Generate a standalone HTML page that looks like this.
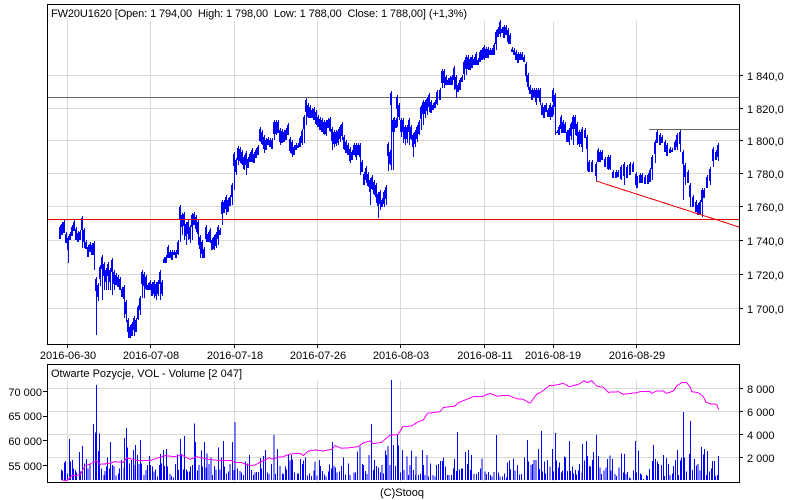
<!DOCTYPE html>
<html><head><meta charset="utf-8"><style>
html,body{margin:0;padding:0;background:#fff}
svg{display:block}
text{font-family:"Liberation Sans",sans-serif;font-size:11px;fill:#000}
</style></head><body>
<svg width="800" height="500" viewBox="0 0 800 500" xmlns="http://www.w3.org/2000/svg">
<defs>
<path id="px" d="M60 225V239M62 222V235M64 220V233M66 232V243M68 236V263M70 232V240M72 225V236M74 220V231M76 227V240M78 231V242M80 230V240M82 216V248M84 228V248M86 240V249M88 245V257M90 242V252M92 243V255M94 241V270M96 277V335M98 283V301M100 265V286M102 255V300M104 262V290M106 268V290M108 262V290M110 268V290M112 258V295M114 270V290M116 273V285M118 275V287M120 277V290M122 287V297M124 285V318M126 300V322M128 318V338M130 325V338M132 322V336M134 316V336M136 318V332M138 305V320M140 296V315M142 270V298M144 272V298M146 275V290M148 283V290M150 280V290M152 282V296M154 280V298M156 282V300M158 280V296M160 270V300M162 280V296M164 257V263M166 255V263M168 245V258M170 250V258M172 250V260M174 250V255M176 250V258M178 240V255M180 205V242M182 213V235M184 212V240M186 222V245M188 220V240M190 225V243M192 213V240M194 212V225M196 215V232M198 220V245M200 235V258M202 240V258M204 247V258M206 225V242M208 232V242M210 228V243M212 238V250M214 235V250M216 232V248M218 225V245M220 228V235M222 200V225M224 200V213M226 195V215M228 198V212M230 195V206M232 183V205M234 152V190M236 158V175M238 146V165M240 147V163M242 150V165M244 155V170M246 151V175M248 157V168M250 152V162M252 148V162M254 152V163M256 148V158M258 145V155M260 127V142M262 130V145M264 135V153M266 138V150M268 137V145M270 138V147M272 138V149M274 120V140M276 120V135M278 120V133M280 128V145M282 129V143M284 130V142M286 128V140M288 123V135M290 137V153M292 140V157M294 145V155M296 143V150M298 143V148M300 136V147M302 129V145M304 115V143M306 98V125M308 103V118M310 105V118M312 108V118M314 107V120M316 110V125M318 115V127M320 117V130M322 118V132M324 120V135M326 120V136M328 118V128M330 117V132M332 127V150M334 130V147M336 130V146M338 129V145M340 125V142M342 122V140M344 135V150M346 140V153M348 143V155M350 147V163M352 150V160M354 143V155M356 143V160M358 143V155M360 143V175M362 160V172M364 172V185M366 166V183M368 172V187M370 178V205M372 175V190M374 180V195M376 183V203M378 192V218M380 190V210M382 198V207M384 190V207M386 185V205M388 142V171M390 150V165M391 91V170M393 118V170M394 117V132M396 118V128M397 95V127M399 103V120M401 118V137M403 118V143M405 125V145M407 125V143M409 118V145M411 125V140M413 133V157M415 130V147M417 125V142M419 120V135M421 105V130M423 100V125M425 100V118M427 97V115M429 93V112M431 100V113M433 103V110M435 100V108M437 90V105M440 88V100M442 69V88M444 69V88M446 75V85M448 78V85M450 76V85M452 75V85M454 66V90M456 75V98M458 83V92M460 78V90M462 75V82M464 60V80M466 55V75M468 55V70M470 57V70M472 55V68M474 57V65M476 52V65M478 58V65M480 50V62M482 48V60M484 45V60M486 47V58M488 47V58M490 48V55M492 48V55M494 43V55M496 30V50M498 27V37M500 20V37M502 27V33M504 25V38M506 25V35M508 28V44M510 33V44M512 47V52M514 48V55M516 50V60M518 52V63M520 52V60M522 52V60M524 55V62M526 62V82M528 73V90M530 85V94M532 88V100M534 88V97M536 88V105M538 88V98M540 88V105M542 103V115M544 105V118M546 103V112M548 108V117M550 103V120M552 105V117M553 88V115M555 93V135M557 130V133M559 125V135M561 115V133M563 120V133M565 122V133M567 130V142M569 128V145M571 122V140M573 115V145M575 115V135M577 122V145M579 130V147M581 130V147M582 127V152M585 128V138M587 135V171M589 160V172M592 160V172M596 162V181M598 148V162M600 150V162M602 150V160M605 157V167M608 155V170M610 155V170M613 170V178M616 170V178M618 170V177M621 165V180M624 162V185M627 165V178M630 162V175M633 162V172M636 172V185M637 176V188M640 173V183M642 173V183M645 175V184M648 173V184M650 168V182M652 155V180M655 140V163M657 130V143M660 133V145M662 135V143M665 140V152M667 143V156M670 147V153M672 148V152M675 140V150M677 133V150M680 130V152M683 150V200M685 163V185M688 170V183M690 183V207M693 195V207M696 200V212M698 203V215M700 200V215M702 188V217M704 188V198M707 175V188M710 167V185M713 147V167M716 150V160M718 143V161"/>
</defs>
<rect width="800" height="500" fill="#fff"/>
<g stroke="#d9d9d9" stroke-width="1" shape-rendering="crispEdges" fill="none">
<path d="M48 75.5H739M48 108.5H739M48 140.5H739M48 173.5H739M48 206.5H739M48 240.5H739M48 274.5H739M48 308.5H739"/>
<path d="M67.5 21V344M150.5 21V344M234.5 21V344M317.5 21V344M400.5 21V344M484.5 21V344M553.5 21V344M636.5 21V344"/>
<path d="M48 388.5H739M48 411.5H739M48 434.5H739M48 457.5H739"/>
<path d="M67.5 381V482M150.5 381V482M234.5 381V482M317.5 381V482M400.5 381V482M484.5 381V482M553.5 381V482M636.5 381V482"/>
</g>
<g fill="none" stroke-width="1" shape-rendering="crispEdges">
<path stroke="#666" d="M48 97.5H739M649 129.5H739"/>
</g>
<g fill="none" stroke="#00f" shape-rendering="crispEdges">
<use href="#px" stroke-width="1" transform="translate(.5 0)"/>
<use href="#px" stroke-width="2" stroke-dasharray="0 2 12 100"/>
</g>
<g fill="none" shape-rendering="crispEdges">
<path stroke="#e00000" stroke-width="1" d="M48 219.5H739"/>
<path stroke="#ee0000" stroke-width="1" d="M596 181L739 227"/>
</g>
<g transform="translate(0 340) scale(.33333)">
<path fill="none" stroke="#00f" stroke-width="3" shape-rendering="crispEdges" d="M185 420V388M188 420V393M194 420V367M197 420V363M203 420V400M209 420V297M212 420V365M218 420V360M221 420V385M227 420V390M230 420V398M238 420V336M241 420V395M247 420V318M254 420V370M260 420V357M264 420V385M270 420V370M280 420V252M286 420V278M290 420V135M295 420V333M298 420V280M305 420V385M312 420V405M315 420V393M320 420V380M323 420V353M328 420V385M331 420V306M337 420V375M342 420V378M348 420V407M355 420V400M359 420V385M364 420V360M372 420V382M374 420V294M380 420V264M383 420V322M389 420V370M395 420V360M400 420V330M405 420V375M407 420V315M412 420V345M417 420V372M421 420V300M424 420V370M432 420V405M438 420V390M442 420V375M448 420V348M452 420V375M458 420V380M462 420V395M467 420V388M473 420V410M478 420V375M481 420V342M485 420V370M490 420V330M493 420V378M499 420V327M503 420V380M510 420V402M515 420V408M520 420V412M526 420V372M532 420V343M535 420V390M541 420V297M544 420V342M550 420V388M553 420V288M559 420V388M562 420V395M568 420V395M572 420V380M578 420V375M583 420V250M586 420V306M592 420V392M597 420V375M604 420V332M607 420V380M613 420V306M618 420V382M621 420V340M627 420V372M633 420V352M638 420V405M644 420V378M648 420V388M655 420V322M660 420V388M664 420V352M670 420V303M673 420V380M679 420V400M686 420V395M690 420V372M697 420V306M702 420V390M705 420V246M713 420V385M720 420V393M724 420V397M731 420V405M737 420V365M742 420V370M748 420V345M755 420V390M760 420V405M765 420V398M770 420V396M776 420V396M782 420V354M785 420V385M791 420V348M796 420V330M802 420V398M807 420V402"/>
<path fill="none" stroke="#f0f" stroke-width="3" shape-rendering="crispEdges" d="M185 420L200 422L215 407L240 405L255 378L270 372L290 362L300 373L330 370L345 365L370 367L380 354L395 357L415 362L450 362L470 355L495 347L525 350L545 345L570 358L590 350L620 357L660 362L695 362L705 368L725 368L750 377L765 375L790 362L810 352"/>
</g>
<g transform="translate(270 340) scale(.33333)">
<path fill="none" stroke="#00f" stroke-width="3" shape-rendering="crispEdges" d="M5 420V372M12 420V285M17 420V402M22 420V327M30 420V378M37 420V400M40 420V402M46 420V380M50 420V388M56 420V343M60 420V362M65 420V345M68 420V358M73 420V397M82 420V400M85 420V400M91 420V357M97 420V372M101 420V362M106 420V353M112 420V407M118 420V400M125 420V408M132 420V392M135 420V365M141 420V407M148 420V360M152 420V378M157 420V393M163 420V403M168 420V410M175 420V395M179 420V373M184 420V385M187 420V306M192 420V378M197 420V383M201 420V398M208 420V395M214 420V378M220 420V353M226 420V403M235 420V370M240 420V405M252 420V397M256 420V397M262 420V335M270 420V320M277 420V372M280 420V375M286 420V393M291 420V402M297 420V345M304 420V252M310 420V390M313 420V360M320 420V378M325 420V382M331 420V397M336 420V375M340 420V400M347 420V332M350 420V345M354 420V318M360 420V375M364 420V120M371 420V315M376 420V378M382 420V285M386 420V317M392 420V397M398 420V330M402 420V390M411 420V350M416 420V405M420 420V375M425 420V332M430 420V390M436 420V405M438 420V350M445 420V405M451 420V400M457 420V330M460 420V375M465 420V405M471 420V345M476 420V410M481 420V370M489 420V405M495 420V410M500 420V375M505 420V372M511 420V363M517 420V363M521 420V352M526 420V380M532 420V405M537 420V405M544 420V405M550 420V385M553 420V357M559 420V393M562 420V276M569 420V388M575 420V386M578 420V386M587 420V336M592 420V372M596 420V330M602 420V390M605 420V345M612 420V402M620 420V402M625 420V396M632 420V385M636 420V355M645 420V395M650 420V402M655 420V396M661 420V405M666 420V410M672 420V396M679 420V285M686 420V398M690 420V410M697 420V410M703 420V400M709 420V412M713 420V368M719 420V362M722 420V388M730 420V356M735 420V392M742 420V375M748 420V403M755 420V402M763 420V352M772 420V300M775 420V365"/>
<path fill="none" stroke="#f0f" stroke-width="3" shape-rendering="crispEdges" d="M0 355L12 358L20 352L40 350L60 342L90 340L100 347L115 333L135 330L160 333L185 328L195 317L215 325L240 323L265 320L280 308L300 303L310 311L335 307L358 287L385 283L398 260L425 258L445 245L460 240L472 220L510 215L520 203L555 198L565 188L590 178L610 170L635 170L660 160L680 168L715 166L740 176L760 178L780 190"/>
</g>
<g transform="translate(530 340) scale(.33333)">
<path fill="none" stroke="#00f" stroke-width="3" shape-rendering="crispEdges" d="M3 420V375M8 420V372M12 420V360M18 420V360M25 420V327M28 420V387M34 420V273M38 420V395M44 420V365M47 420V400M53 420V360M60 420V380M67 420V327M70 420V395M76 420V279M79 420V362M85 420V383M88 420V368M95 420V398M98 420V392M104 420V350M106 420V353M112 420V393M118 420V303M121 420V393M127 420V380M130 420V400M137 420V390M140 420V403M146 420V392M149 420V372M156 420V398M157 420V312M163 420V362M170 420V303M172 420V348M179 420V378M181 420V380M187 420V360M190 420V336M199 420V285M200 420V385M206 420V348M210 420V382M215 420V402M222 420V392M228 420V383M232 420V357M240 420V347M243 420V392M247 420V357M255 420V402M259 420V408M267 420V383M274 420V340M280 420V397M283 420V342M288 420V402M292 420V396M298 420V412M302 420V415M310 420V392M316 420V303M320 420V398M325 420V332M331 420V400M334 420V403M341 420V417M349 420V405M352 420V408M358 420V387M367 420V363M370 420V315M376 420V357M382 420V365M386 420V372M394 420V375M400 420V345M403 420V408M409 420V354M416 420V372M420 420V405M427 420V400M430 420V378M436 420V360M443 420V330M446 420V405M452 420V362M454 420V353M460 420V216M463 420V352M470 420V395M478 420V342M481 420V243M487 420V390M493 420V357M499 420V376M504 420V372M510 420V392M514 420V321M520 420V344M523 420V327M530 420V405M532 420V333M538 420V395M545 420V386M548 420V363M553 420V363M556 420V408M562 420V405M565 420V348"/>
<path fill="none" stroke="#f0f" stroke-width="3" shape-rendering="crispEdges" d="M0 190L20 163L35 155L58 137L80 135L100 130L118 140L145 133L163 122L170 128L185 122L200 138L220 142L235 157L265 155L280 163L320 158L330 155L360 155L365 160L380 153L400 153L410 160L430 153L440 138L455 128L470 128L480 140L485 155L505 158L520 170L528 187L545 192L560 193L566 208"/>
</g>
<g fill="none" stroke="#000" stroke-width="1" shape-rendering="crispEdges">
<rect x="47.5" y="4.5" width="692" height="340"/>
<rect x="47.5" y="364.5" width="692" height="118"/>
<path d="M67.5 344V348M150.5 344V348M234.5 344V348M317.5 344V348M400.5 344V348M484.5 344V348M553.5 344V348M636.5 344V348"/>
<path d="M739 75.5H743M739 108.5H743M739 140.5H743M739 173.5H743M739 206.5H743M739 240.5H743M739 274.5H743M739 308.5H743"/>
<path d="M739 388.5H743M739 411.5H743M739 434.5H743M739 457.5H743"/>
<path d="M43 391.5H47M43 416.5H47M43 440.5H47M43 465.5H47"/>
</g>
<text x="51" y="17" xml:space="preserve" textLength="416">FW20U1620 [Open: 1 794,00  High: 1 798,00  Low: 1 788,00  Close: 1 788,00] (+1,3%)</text>
<text x="51" y="377" textLength="191">Otwarte Pozycje, VOL - Volume [2 047]</text>
<g>
<text x="747" y="80">1 840,0</text>
<text x="747" y="113">1 820,0</text>
<text x="747" y="145">1 800,0</text>
<text x="747" y="178">1 780,0</text>
<text x="747" y="211">1 760,0</text>
<text x="747" y="245">1 740,0</text>
<text x="747" y="279">1 720,0</text>
<text x="747" y="313">1 700,0</text>
<text x="747" y="393">8 000</text>
<text x="747" y="416">6 000</text>
<text x="747" y="439">4 000</text>
<text x="747" y="462">2 000</text>
</g>
<g text-anchor="end">
<text x="42" y="396">70 000</text>
<text x="42" y="420">65 000</text>
<text x="42" y="445">60 000</text>
<text x="42" y="470">55 000</text>
</g>
<g text-anchor="middle">
<text x="68" y="359">2016-06-30</text>
<text x="151" y="359">2016-07-08</text>
<text x="235" y="359">2016-07-18</text>
<text x="318" y="359">2016-07-26</text>
<text x="401" y="359">2016-08-03</text>
<text x="485" y="359">2016-08-11</text>
<text x="553" y="359">2016-08-19</text>
<text x="637" y="359">2016-08-29</text>
<text x="402" y="496">(C)Stooq</text>
</g>
</svg>
</body></html>
